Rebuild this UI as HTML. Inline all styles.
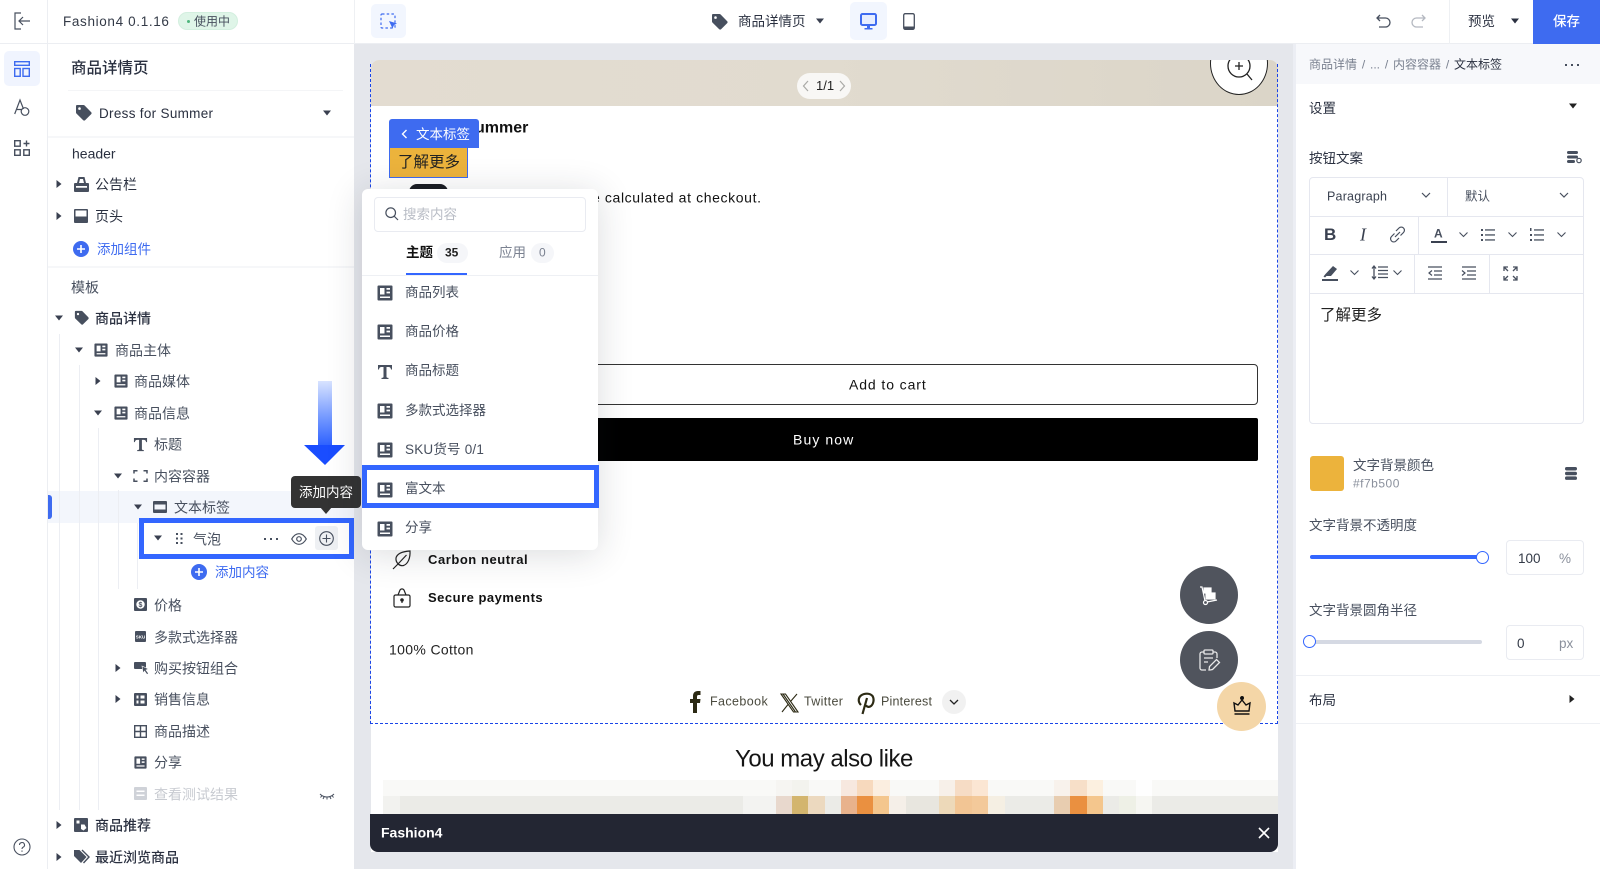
<!DOCTYPE html>
<html lang="zh-CN">
<head>
<meta charset="utf-8">
<title>Fashion4 商品详情页</title>
<style>
html,body{margin:0;padding:0;}
html{background:#fff;}
body{width:1600px;height:869px;overflow:hidden;position:relative;background:#fff;font-family:"Liberation Sans","Noto Sans CJK SC",sans-serif;color:#474f5e;font-size:14px;filter:blur(.35px);}
.a{position:absolute;}
.t{position:absolute;white-space:nowrap;line-height:1;transform:translateY(calc(-50% + .7px));}
svg{position:absolute;overflow:visible;display:block;}
.d{color:#2a3040;}
.lk{color:#3e6bf0;}
.caret{position:absolute;width:0;height:0;}
.cd{border-left:4px solid transparent;border-right:4px solid transparent;border-top:5px solid #3a4050;transform:translate(-50%,-50%);}
.cr{border-top:4px solid transparent;border-bottom:4px solid transparent;border-left:5px solid #3a4050;transform:translate(-50%,-50%);}
.vl{position:absolute;width:1px;background:#eceef3;}
.hl{position:absolute;height:1px;background:#eef0f4;}
.p{color:#111;}
</style>
</head>
<body>
<svg width="0" height="0" style="position:absolute">
<symbol id="w" viewBox="0 0 16 16"><path fill="#474f5e" fill-rule="evenodd" d="M1.500 .5h13a1 1 0 0 1 1 1v13a1 1 0 0 1-1 1h-13a1 1 0 0 1-1-1v-13a1 1 0 0 1 1-1zM3 3v6.500h4.500V3H3zm6.500 0v1.800H13V3H9.500zm0 3.600v1.800H13V6.600H9.500zM3 11.500V13h10v-1.500H3z"/></symbol>
<symbol id="tag" viewBox="0 0 18 18"><path fill="#474f5e" d="M2 1h6.500a1.500 1.500 0 0 1 1 .4l6.600 6.700a1.500 1.500 0 0 1 0 2.100l-5.900 5.900a1.500 1.500 0 0 1-2.100 0L1.400 9.500a1.500 1.500 0 0 1-.4-1V2a1 1 0 0 1 1-1zm2.500 2.300a1.300 1.300 0 1 0 0 2.600 1.300 1.300 0 0 0 0-2.600z"/></symbol>
<symbol id="T" viewBox="0 0 16 16"><path fill="#474f5e" d="M1 1h14v4.500h-1C13.700 3.600 13 3 11 3H9.500v9.500c0 1 .4 1.300 2 1.400V15h-7v-1.100c1.600-.1 2-.4 2-1.400V3H5C3 3 2.300 3.600 2 5.500H1z"/></symbol>
</svg>

<!-- canvas -->
<div class="a" style="left:354px;top:44px;width:939px;height:825px;background:#e5e7ec"></div>
<div class="a" style="left:371px;top:60px;width:907px;height:792px;background:#fff;border-radius:8px 8px 0 0;overflow:hidden">
  <div class="a" style="left:0;top:0;width:100%;height:46px;background:linear-gradient(90deg,#e3dcd1,#e1dbcf 50%,#dbd5c8)"></div>
</div>
<!-- pager -->
<div class="a" style="left:797px;top:73px;width:54px;height:26px;border-radius:13px;background:#f8f7f5"></div>
<div class="t" style="left:816px;top:85px;font-size:13px;color:#222">1/1</div>
<svg style="left:802px;top:80px" width="8" height="12" fill="none" stroke="#a9a9a6" stroke-width="1.200"><path d="M6 1 1.500 6 6 11"/></svg>
<svg style="left:838px;top:80px" width="8" height="12" fill="none" stroke="#a9a9a6" stroke-width="1.200"><path d="M2 1l4.500 5L2 11"/></svg>
<!-- zoom circle -->
<div class="a" style="left:371px;top:60px;width:907px;height:46px;overflow:hidden">
  <div class="a" style="left:839px;top:-28px;width:58px;height:63px;border-radius:50%;background:#fff;border:1px solid #222;box-sizing:border-box"></div>
  <svg style="left:856px;top:-6px" width="26" height="28" fill="none" stroke="#222" stroke-width="1.300"><circle cx="12" cy="12" r="11"/><path d="M20 20l5 6M8 12h8M12 8v8"/></svg>
</div>
<!-- dashed selection -->
<div class="a" style="left:370px;top:64px;width:908px;height:660px;box-sizing:border-box;border:1px dashed #1a45e8;border-top:0"></div>

<!-- product content -->
<div class="t p" style="left:475px;top:128px;font-size:16px;font-weight:bold;">ummer</div>
<div class="a" style="left:409px;top:184px;width:39px;height:14px;border-radius:8px 8px 0 0;background:#1b1d24"></div>
<div class="t p" style="left:592px;top:197px;font-size:14px;letter-spacing:.62px">e calculated at checkout.</div>
<div class="a" style="left:560px;top:364px;width:698px;height:41px;box-sizing:border-box;border:1px solid #333;border-radius:4px;background:#fff"></div>
<div class="t p" style="left:849px;top:383.500px;font-size:14px;letter-spacing:.9px">Add to cart</div>
<div class="a" style="left:560px;top:418px;width:698px;height:43px;background:#000;border-radius:2px"></div>
<div class="t" style="left:793px;top:439px;font-size:14px;color:#fff;letter-spacing:1.100px">Buy now</div>

<svg style="left:392px;top:550px" width="20" height="20" fill="none" stroke="#222" stroke-width="1.200"><path d="M1 19l5-5M4 8c1-4 6-6.500 14-7 .4 7-2 13-6.500 14.500C8 16.500 3.500 13 4 8zM6 14 14.500 5"/></svg>
<div class="t p" style="left:428px;top:559px;font-size:13px;font-weight:bold;letter-spacing:.55px">Carbon neutral</div>
<svg style="left:393px;top:588px" width="18" height="20" fill="none" stroke="#222" stroke-width="1.200"><rect x="1" y="7" width="16" height="12" rx="1.500"/><path d="M5 7l2-5c1-1.500 3-1.500 4 0l2 5"/><circle cx="9" cy="12" r="1.200" fill="#222"/><path d="M9 12v3"/></svg>
<div class="t p" style="left:428px;top:597px;font-size:13px;font-weight:bold;letter-spacing:.5px">Secure payments</div>
<div class="t" style="left:389px;top:649px;font-size:14px;color:#222;letter-spacing:.35px">100% Cotton</div>

<svg style="left:690px;top:691px" width="11" height="22"><path fill="#2c2a14" d="M3 22V12H0V8h3V5c0-3.300 2-5 4.800-5H10.500v4H8.700C7.500 4 7 4.600 7 5.700V8h3.500L10 12H7v10z"/></svg>
<div class="t" style="left:710px;top:701px;font-size:12.500px;color:#4a4a3e;letter-spacing:.4px">Facebook</div>
<svg style="left:780px;top:693px" width="19" height="20" fill="none" stroke="#2c2a14" stroke-width="1.100"><path d="M1 1h4.500L18 19h-4.500zM17 1 10.500 8.500M8 11.500 2 19M3 1l12.500 18"/></svg>
<div class="t" style="left:804px;top:701px;font-size:12.500px;color:#4a4a3e;letter-spacing:.35px">Twitter</div>
<svg style="left:857px;top:692px" width="18" height="23" fill="none" stroke="#2c2a14" stroke-width="2.200"><path d="M4 13C1 10 1 6 4 3.500 7.500 1 13 1 15.500 4c2 3 1 8-1.500 10-2 1.500-4.500 1-5-1M10 6 5.500 22"/></svg>
<div class="t" style="left:881px;top:701px;font-size:12.500px;color:#4a4a3e;letter-spacing:.2px">Pinterest</div>
<div class="a" style="left:942px;top:690px;width:24px;height:24px;border-radius:50%;background:#f1f1f1"></div>
<svg style="left:949px;top:699px" width="10" height="7" fill="none" stroke="#222" stroke-width="1.300"><path d="M1 1l4 4 4-4"/></svg>

<div class="t" style="left:735px;top:759px;font-size:24px;color:#151515;letter-spacing:-.47px">You may also like</div>

<!-- pixelated strip -->
<svg style="left:0;top:780px" width="1278" height="34">
<rect x="383" y="0" width="895" height="16" fill="#f9f9f7"/>
<rect x="383" y="16" width="895" height="18" fill="#ebebe7"/>
<rect x="383" y="16" width="17" height="18" fill="#f2f2ef"/>
<rect x="743" y="16" width="33" height="18" fill="#f3f3f1"/>
<rect x="776" y="0" width="17" height="16" fill="#f6f5f2"/><rect x="776" y="16" width="17" height="18" fill="#e8d8cd"/>
<rect x="792" y="0" width="17" height="16" fill="#f3f3ee"/><rect x="792" y="16" width="17" height="18" fill="#d3b56e"/>
<rect x="808" y="16" width="17" height="18" fill="#ecd9bf"/>
<rect x="841" y="0" width="17" height="16" fill="#f7e8df"/><rect x="841" y="16" width="17" height="18" fill="#e8b28c"/>
<rect x="857" y="0" width="17" height="16" fill="#f7d9bd"/><rect x="857" y="16" width="17" height="18" fill="#ea9040"/>
<rect x="873" y="0" width="17" height="16" fill="#fbeee0"/><rect x="873" y="16" width="17" height="18" fill="#f4c68d"/>
<rect x="889" y="16" width="17" height="18" fill="#f5efe8"/>
<rect x="906" y="16" width="33" height="18" fill="#e8e6df"/>
<rect x="939" y="0" width="16" height="16" fill="#f7f0e9"/><rect x="939" y="16" width="16" height="18" fill="#edd9b9"/>
<rect x="955" y="0" width="17" height="16" fill="#f6dcc5"/><rect x="955" y="16" width="17" height="18" fill="#f2c594"/>
<rect x="972" y="0" width="16" height="16" fill="#fbe6d3"/><rect x="972" y="16" width="16" height="18" fill="#f3c99a"/>
<rect x="988" y="16" width="17" height="18" fill="#f5efe3"/>
<rect x="1054" y="0" width="16" height="16" fill="#f8f2ec"/><rect x="1054" y="16" width="16" height="18" fill="#e8cdb0"/>
<rect x="1070" y="0" width="17" height="16" fill="#f7dfc8"/><rect x="1070" y="16" width="17" height="18" fill="#ea9040"/>
<rect x="1087" y="0" width="16" height="16" fill="#fcf0e0"/><rect x="1087" y="16" width="16" height="18" fill="#f4c68d"/>
<rect x="1119" y="16" width="17" height="18" fill="#eef0e6"/>
<rect x="1136" y="0" width="16" height="16" fill="#fefefe"/><rect x="1136" y="16" width="16" height="18" fill="#f6f6f2"/>
</svg>

<!-- bottom bar -->
<div class="a" style="left:370px;top:814px;width:908px;height:38px;background:#232633;border-radius:0 0 8px 8px"></div>
<div class="t" style="left:381px;top:832px;font-size:14px;font-weight:bold;color:#fff">Fashion4</div>
<svg style="left:1258px;top:827px" width="12" height="12" fill="none" stroke="#fff" stroke-width="1.600"><path d="M1 1l10 10M11 1 1 11"/></svg>

<!-- float buttons -->
<div class="a" style="left:1180px;top:566px;width:58px;height:58px;border-radius:50%;background:#50545d"></div>
<svg style="left:1199px;top:586px" width="20" height="20" fill="none" stroke="#fff" stroke-width="1.200"><path d="M1 1h2l3 14"/><circle cx="6.500" cy="16.500" r="2"/><path d="M8 16l10-2"/><rect x="5" y="2" width="7" height="5" fill="#fff"/><rect x="7" y="7" width="9" height="6" fill="#fff"/></svg>
<div class="a" style="left:1180px;top:631px;width:58px;height:58px;border-radius:50%;background:#50545d"></div>
<svg style="left:1199px;top:649px" width="21" height="23" fill="none" stroke="#e8e8e8" stroke-width="1.300"><path d="M5 3H3a2 2 0 0 0-2 2v14a2 2 0 0 0 2 2h4M14 3h2a2 2 0 0 1 2 2v4"/><rect x="5" y="1" width="9" height="4" rx="1"/><path d="M5 9h9M5 13h4M11 21l-1 0 .5-3.500 7-7 3 3-7 7z"/></svg>
<div class="a" style="left:1217px;top:682px;width:49px;height:49px;border-radius:50%;background:#f4d6a7"></div>
<svg style="left:1233px;top:696px" width="18" height="20" fill="none" stroke="#111" stroke-width="1.400"><circle cx="9" cy="2" r="1.300" fill="#111"/><path d="M9 4 5 9 1 7l1 8h14l1-8-4 2zM1.500 18h15"/></svg>

<!-- top bar -->
<div class="a" style="left:0;top:0;width:1600px;height:44px;background:#fff;border-bottom:1px solid #eceef2;box-sizing:border-box"></div>
<svg style="left:14px;top:12px" width="17" height="18" fill="none" stroke="#474f5e" stroke-width="1.200"><path d="M7 1H1v16h6M16 9H5M9 5 5 9l4 4"/></svg>
<div class="a" style="left:47px;top:0;width:1px;height:869px;background:#eceef2"></div>
<div class="t" style="left:63px;top:20.500px;font-size:13.500px;color:#333a47;letter-spacing:.65px">Fashion4 0.1.16</div>
<div class="a" style="left:178px;top:12px;width:60px;height:18px;border-radius:9px;background:#dff5e8;border:1px solid #d3efdf;box-sizing:border-box"></div>
<div class="a" style="left:187px;top:20px;width:3px;height:3px;border-radius:50%;background:#4fb67d"></div>
<div class="t" style="left:194px;top:20.500px;font-size:12px">使用中</div>
<div class="a" style="left:354px;top:0;width:1px;height:44px;background:#eef0f3"></div>

<div class="a" style="left:371px;top:4px;width:35px;height:34px;border-radius:5px;background:#f2f6fe"></div>
<svg style="left:380px;top:13px" width="18" height="17" fill="none"><rect x="1" y="1" width="14" height="14" rx="1" stroke="#3e6bf0" stroke-width="1.200" stroke-dasharray="2.500 2.200"/><path fill="#3e6bf0" d="M9 8l8 2.500-3 1.500-1.500 3.500z"/></svg>

<svg style="left:711px;top:13px" width="18" height="18"><use href="#tag"/></svg>
<div class="t d" style="left:738px;top:20.500px;font-size:13.500px">商品详情页</div>
<div class="caret cd" style="left:820px;top:21px"></div>
<div class="a" style="left:850px;top:2px;width:37px;height:38px;border-radius:5px;background:#f2f6fe"></div>
<svg style="left:860px;top:13px" width="17" height="17"><rect x="1" y="1" width="15" height="11" rx="1.500" fill="#e7eeff" stroke="#3e6bf0" stroke-width="2"/><path fill="#3e6bf0" d="M7 12h3v3H7zM4.500 15h8v1.500h-8z"/></svg>
<svg style="left:903px;top:13px" width="12" height="17" fill="none"><rect x=".7" y=".7" width="10.600" height="15.600" rx="1.500" stroke="#474f5e" stroke-width="1.300"/><rect x="1" y="13.500" width="10" height="2.500" fill="#474f5e"/></svg>

<svg style="left:1376px;top:14px" width="15" height="15" fill="none" stroke="#474f5e" stroke-width="1.300"><path d="M4 1 1 4l3 3M1 4h8.500a4 4 0 0 1 0 9H3"/></svg>
<svg style="left:1411px;top:14px" width="15" height="15" fill="none" stroke="#b4b8c0" stroke-width="1.300"><path d="M11 1l3 3-3 3M14 4H5.500a4 4 0 0 0 0 9H12"/></svg>
<div class="a" style="left:1449px;top:0;width:1px;height:44px;background:#eef0f3"></div>
<div class="t d" style="left:1468px;top:20.500px;font-size:13.500px">预览</div>
<div class="caret cd" style="left:1515px;top:21px;border-top-color:#2a3040"></div>
<div class="a" style="left:1533px;top:0;width:67px;height:44px;background:#3e6bf0"></div>
<div class="t" style="left:1553px;top:20.500px;font-size:13.500px;font-weight:500;color:#fff">保存</div>

<!-- left rail -->
<div class="a" style="left:4px;top:51px;width:36px;height:35px;border-radius:5px;background:#f0f4fe"></div>
<svg style="left:14px;top:61px" width="16" height="16" fill="none" stroke="#3e6bf0" stroke-width="1.400"><rect x=".7" y=".7" width="14.600" height="3.600"/><rect x=".7" y="7.500" width="5.500" height="7.800"/><rect x="9" y="7.500" width="6.300" height="7.800"/></svg>
<svg style="left:14px;top:99px" width="16" height="18" fill="none" stroke="#474f5e" stroke-width="1.200"><path d="M.7 15 6 1l3.500 9M3 10.500h5"/><circle cx="11" cy="12.500" r="3.800"/></svg>
<svg style="left:14px;top:140px" width="16" height="16" fill="none" stroke="#474f5e" stroke-width="1.400"><rect x=".7" y=".7" width="5.500" height="5.500"/><rect x=".7" y="9.800" width="5.500" height="5.500"/><rect x="9.800" y="9.800" width="5.500" height="5.500"/><path d="M12.500.5v6M9.500 3.500h6"/></svg>
<svg style="left:13px;top:838px" width="18" height="18" fill="none" stroke="#474f5e" stroke-width="1.100"><circle cx="9" cy="9" r="8"/><path d="M6.500 7a2.500 2.500 0 1 1 3.500 2.300c-.7.300-1 .8-1 1.700M9 12.500v1.200"/></svg>

<!-- left panel -->
<div class="t d" style="left:71px;top:68px;font-size:15.500px;font-weight:500">商品详情页</div>
<div class="hl" style="left:68px;top:90px;width:275px;background:#f4f5f7"></div>
<svg style="left:75px;top:104px" width="18" height="18"><use href="#tag"/></svg>
<div class="t d" style="left:99px;top:112.500px;font-size:13.500px;letter-spacing:.3px">Dress for Summer</div>
<div class="caret cd" style="left:327px;top:113px"></div>
<div class="hl" style="left:48px;top:136px;width:306px;height:2px;background:#f6f7f9"></div>
<div class="t d" style="left:72px;top:152.500px;font-size:14px">header</div>

<div class="caret cr" style="left:59px;top:184px"></div>
<svg style="left:74px;top:177px" width="15" height="15"><path fill="#474f5e" fill-rule="evenodd" d="M4.500 0h6L12 6h2a1 1 0 0 1 1 1v7a1 1 0 0 1-1 1H1a1 1 0 0 1-1-1V7a1 1 0 0 1 1-1h2zM6 2 5 6h5L9 2zM2 9v1.800h11V9z"/></svg>
<div class="t d" style="left:95px;top:184px;font-size:14px">公告栏</div>
<div class="caret cr" style="left:59px;top:216px"></div>
<svg style="left:74px;top:209px" width="14" height="14"><path fill="#474f5e" fill-rule="evenodd" d="M1 0h12a1 1 0 0 1 1 1v12a1 1 0 0 1-1 1H1a1 1 0 0 1-1-1V1a1 1 0 0 1 1-1zm.500 1.500v6h11v-6z"/></svg>
<div class="t d" style="left:95px;top:216px;font-size:14px">页头</div>
<div class="a" style="left:73px;top:241px;width:16px;height:16px;border-radius:50%;background:#3e6bf0"></div>
<svg style="left:73px;top:241px" width="16" height="16" stroke="#fff" stroke-width="1.600"><path d="M4 8h8M8 4v8"/></svg>
<div class="t lk" style="left:97px;top:249px;font-size:13.500px">添加组件</div>
<div class="hl" style="left:48px;top:266px;width:306px;height:2px;background:#f6f7f9"></div>
<div class="t" style="left:71px;top:287px;font-size:14px">模板</div>

<!-- tree lines -->
<div class="vl" style="left:59px;top:334px;height:476px"></div>
<div class="vl" style="left:79px;top:365px;height:445px"></div>
<div class="vl" style="left:98px;top:428px;height:382px"></div>

<div class="a" style="left:48px;top:491px;width:306px;height:32px;background:#f3f6fc"></div>
<div class="a" style="left:48px;top:495px;width:4px;height:24px;border-radius:0 3px 3px 0;background:#3e6bf0"></div>
<div class="vl" style="left:59px;top:491px;height:32px"></div>
<div class="vl" style="left:79px;top:491px;height:32px"></div>
<div class="vl" style="left:98px;top:491px;height:32px"></div>
<div class="vl" style="left:118px;top:490px;height:99px"></div>
<div class="vl" style="left:137px;top:523px;height:66px"></div>

<div class="caret cd" style="left:59px;top:318px"></div>
<svg style="left:74px;top:310px" width="16" height="16"><use href="#tag"/></svg>
<div class="t d" style="left:95px;top:318px;font-size:14px;font-weight:500">商品详情</div>

<div class="caret cd" style="left:79px;top:350px"></div>
<svg style="left:94px;top:343px" width="14" height="14"><use href="#w"/></svg>
<div class="t" style="left:115px;top:350px;font-size:14px">商品主体</div>

<div class="caret cr" style="left:98px;top:381px"></div>
<svg style="left:114px;top:374px" width="14" height="14"><use href="#w"/></svg>
<div class="t" style="left:134px;top:381px;font-size:14px">商品媒体</div>

<div class="caret cd" style="left:98px;top:413px"></div>
<svg style="left:114px;top:406px" width="14" height="14"><use href="#w"/></svg>
<div class="t" style="left:134px;top:413px;font-size:14px">商品信息</div>

<svg style="left:133px;top:437px" width="15" height="15"><use href="#T"/></svg>
<div class="t" style="left:154px;top:444px;font-size:14px">标题</div>

<div class="caret cd" style="left:118px;top:476px"></div>
<svg style="left:134px;top:470px" width="13" height="12" fill="none" stroke="#474f5e" stroke-width="1.500"><path d="M0 3.500V.7h3.500M9.500.7H13v2.800M13 8.500v2.800H9.500M3.500 11.300H0V8.500"/></svg>
<div class="t" style="left:154px;top:476px;font-size:14px">内容容器</div>

<div class="caret cd" style="left:138px;top:507px"></div>
<svg style="left:153px;top:501px" width="14" height="12"><path fill="#474f5e" fill-rule="evenodd" d="M1 0h12a1 1 0 0 1 1 1v10a1 1 0 0 1-1 1H1a1 1 0 0 1-1-1V1a1 1 0 0 1 1-1zm.500 3.500v5h11v-5z"/></svg>
<div class="t" style="left:174px;top:507px;font-size:14px">文本标签</div>

<!-- highlighted row -->
<div class="a" style="left:139px;top:518px;width:215px;height:41px;box-sizing:border-box;border:5px solid #3366ff;background:#fff"></div>
<div class="caret cd" style="left:158px;top:538px"></div>
<svg style="left:176px;top:533px" width="7" height="12" fill="#474f5e"><rect width="2" height="2"/><rect x="4.500" width="2" height="2"/><rect y="4.500" width="2" height="2"/><rect x="4.500" y="4.500" width="2" height="2"/><rect y="9" width="2" height="2"/><rect x="4.500" y="9" width="2" height="2"/></svg>
<div class="t" style="left:193px;top:539px;font-size:14px">气泡</div>
<svg style="left:264px;top:538px" width="15" height="3" fill="#474f5e"><rect width="2" height="2"/><rect x="6" width="2" height="2"/><rect x="12" width="2" height="2"/></svg>
<svg style="left:291px;top:533px" width="16" height="12" fill="none" stroke="#474f5e" stroke-width="1.200"><path d="M.7 6C3 2 5.500.7 8 .7S13 2 15.300 6C13 10 10.500 11.300 8 11.300S3 10 .7 6z"/><circle cx="8" cy="6" r="2.300"/></svg>
<div class="a" style="left:315px;top:526px;width:23px;height:24px;border-radius:3px;background:#eef0f3"></div>
<svg style="left:319px;top:531px" width="15" height="15" fill="none" stroke="#474f5e" stroke-width="1.100"><circle cx="7.500" cy="7.500" r="6.800"/><path d="M3.500 7.500h8M7.500 3.500v8"/></svg>

<!-- tooltip -->
<div class="a" style="left:291px;top:476px;width:70px;height:32px;border-radius:4px;background:#333"></div>
<div class="a" style="left:320px;top:507px;width:0;height:0;border-left:6px solid transparent;border-right:6px solid transparent;border-top:7px solid #333"></div>
<div class="t" style="left:299px;top:492px;font-size:13.500px;color:#fff">添加内容</div>

<!-- arrow -->
<div class="a" style="left:318px;top:381px;width:14px;height:64px;background:linear-gradient(180deg,#d8e3ff,#6f95ff 60%,#2f62ff)"></div>
<div class="a" style="left:304px;top:445px;width:0;height:0;border-left:21px solid transparent;border-right:20px solid transparent;border-top:20px solid #1a4dff"></div>

<div class="a" style="left:191px;top:564px;width:16px;height:16px;border-radius:50%;background:#3e6bf0"></div>
<svg style="left:191px;top:564px" width="16" height="16" stroke="#fff" stroke-width="1.600"><path d="M4 8h8M8 4v8"/></svg>
<div class="t lk" style="left:215px;top:572px;font-size:13.500px">添加内容</div>

<svg style="left:134px;top:598px" width="13" height="13"><rect width="13" height="13" rx="1" fill="#474f5e"/><circle cx="6.500" cy="6.500" r="4.200" fill="#fff"/><text x="6.500" y="9" font-size="7" font-weight="bold" text-anchor="middle" fill="#474f5e" font-family="Liberation Sans, sans-serif">$</text></svg>
<div class="t" style="left:154px;top:605px;font-size:14px">价格</div>
<svg style="left:135px;top:631px" width="11" height="11"><rect width="11" height="11" rx="1" fill="#474f5e"/><text x="5.500" y="7.300" font-size="4.500" font-weight="bold" text-anchor="middle" fill="#fff" font-family="Liberation Sans, sans-serif">SKU</text></svg>
<div class="t" style="left:154px;top:637px;font-size:14px">多款式选择器</div>
<div class="caret cr" style="left:118px;top:668px"></div>
<svg style="left:134px;top:662px" width="15" height="13"><rect width="12" height="7" rx="1" fill="#474f5e"/><path fill="#474f5e" stroke="#fff" stroke-width=".6" d="M8 4l6.500 3-2.500 1 2.500 3.500-1.500 1L10.500 9l-1.500 2z"/></svg>
<div class="t" style="left:154px;top:668px;font-size:14px">购买按钮组合</div>
<div class="caret cr" style="left:118px;top:699px"></div>
<svg style="left:134px;top:693px" width="13" height="13"><path fill="#474f5e" fill-rule="evenodd" d="M1 0h11a1 1 0 0 1 1 1v11a1 1 0 0 1-1 1H1a1 1 0 0 1-1-1V1a1 1 0 0 1 1-1zm1.500 2.500v3h2v-3zm0 5v3h2v-3zm4-5v3h4v-3zm0 5v3h4v-3z"/></svg>
<div class="t" style="left:154px;top:699px;font-size:14px">销售信息</div>
<svg style="left:134px;top:725px" width="13" height="13" fill="none" stroke="#474f5e" stroke-width="1.400"><rect x=".7" y=".7" width="11.600" height="11.600"/><path d="M6.500 .7v11.600M.7 6.500h11.600"/></svg>
<div class="t" style="left:154px;top:731px;font-size:14px">商品描述</div>
<svg style="left:134px;top:756px" width="13" height="13"><use href="#w"/></svg>
<div class="t" style="left:154px;top:762px;font-size:14px">分享</div>
<svg style="left:134px;top:787px" width="13" height="13"><path fill="#cfd2d8" fill-rule="evenodd" d="M1 0h11a1 1 0 0 1 1 1v11a1 1 0 0 1-1 1H1a1 1 0 0 1-1-1V1a1 1 0 0 1 1-1zm1.500 3.500v1.500h8V3.500zm0 4v1.500h8V7.500z"/></svg>
<div class="t" style="left:154px;top:794px;font-size:14px;color:#c8cbd1">查看测试结果</div>
<svg style="left:319px;top:792px" width="16" height="8" fill="none" stroke="#474f5e" stroke-width="1"><path d="M1 2c4 4 10 4 14 0M3 3.500 1.500 5.500M8 5v2.500M13 3.500l1.500 2M5 5 4 7M11 5l1 2"/></svg>

<div class="caret cr" style="left:59px;top:825px"></div>
<svg style="left:74px;top:818px" width="14" height="14"><path fill="#474f5e" fill-rule="evenodd" d="M1 0h12a1 1 0 0 1 1 1v12a1 1 0 0 1-1 1H1a1 1 0 0 1-1-1V1a1 1 0 0 1 1-1zm1.500 2.500v3h3v-3zM7 6.500V11l2.500 1.500 3-2.500-2-3.500z"/></svg>
<div class="t d" style="left:95px;top:825px;font-size:14px;font-weight:500">商品推荐</div>
<div class="caret cr" style="left:59px;top:857px"></div>
<svg style="left:73px;top:849px" width="17" height="16"><path fill="#474f5e" d="M1 1h5.500l7 7-5.500 6-7-7z"/><path fill="none" stroke="#474f5e" stroke-width="1.400" d="M9 1l7 7-5.500 6"/></svg>
<div class="t d" style="left:95px;top:856.500px;font-size:14px;font-weight:500">最近浏览商品</div>

<!-- right panel -->
<div class="a" style="left:1293px;top:44px;width:307px;height:825px;background:#fff"></div>
<div class="a" style="left:1293px;top:44px;width:307px;height:40px;background:#f7f8fb"></div>
<div class="t" style="left:1309px;top:64px;font-size:12px;color:#7a8190;word-spacing:1.500px">商品详情 / ... / 内容容器 / <span style="color:#2a3040">文本标签</span></div>
<svg style="left:1565px;top:64px" width="15" height="2" fill="#474f5e"><rect width="2" height="2"/><rect x="6" width="2" height="2"/><rect x="12" width="2" height="2"/></svg>

<div class="t d" style="left:1309px;top:108px;font-size:13.500px">设置</div>
<div class="caret cd" style="left:1573px;top:106px;border-top-color:#222"></div>
<div class="t d" style="left:1309px;top:158px;font-size:13.500px">按钮文案</div>
<svg style="left:1567px;top:151px" width="15" height="13" fill="#474f5e"><rect width="11" height="3" rx="1.500"/><rect y="4.500" width="11" height="3" rx="1.500"/><rect y="9" width="8" height="3" rx="1.500"/><circle cx="12" cy="9.500" r="2.200" fill="none" stroke="#474f5e" stroke-width="1.200"/></svg>

<div class="a" style="left:1309px;top:177px;width:275px;height:247px;box-sizing:border-box;border:1px solid #e5e7ef;border-radius:4px;background:#fff"></div>
<div class="hl" style="left:1310px;top:216px;width:273px;background:#e5e7ef"></div>
<div class="hl" style="left:1310px;top:254px;width:273px;background:#e5e7ef"></div>
<div class="hl" style="left:1310px;top:293px;width:273px;background:#e5e7ef"></div>
<div class="vl" style="left:1447px;top:177px;height:39px;background:#e5e7ef"></div>
<div class="vl" style="left:1418px;top:216px;height:38px;background:#e5e7ef"></div>
<div class="vl" style="left:1414px;top:254px;height:39px;background:#e5e7ef"></div>
<div class="vl" style="left:1489px;top:254px;height:39px;background:#e5e7ef"></div>

<div class="t" style="left:1327px;top:195.500px;font-size:12.500px;color:#3a4150;letter-spacing:.2px">Paragraph</div>
<svg style="left:1421px;top:192px" width="10" height="7" fill="none" stroke="#474f5e" stroke-width="1.200"><path d="M1 1l4 4 4-4"/></svg>
<div class="t" style="left:1465px;top:195.500px;font-size:12.500px">默认</div>
<svg style="left:1559px;top:192px" width="10" height="7" fill="none" stroke="#474f5e" stroke-width="1.200"><path d="M1 1l4 4 4-4"/></svg>

<div class="t" style="left:1324px;top:234px;font-size:17px;font-weight:bold;color:#3a4150">B</div>
<div class="t" style="left:1360px;top:234px;font-size:18px;font-style:italic;font-family:'Liberation Serif',serif;color:#3a4150">I</div>
<svg style="left:1389px;top:226px" width="17" height="17" fill="none" stroke="#474f5e" stroke-width="1.200"><path d="M7 5l3-3a3 3 0 0 1 4.500 4.500l-3 3M10 12l-3 3a3 3 0 0 1-4.500-4.500l3-3M6 11l5-5"/></svg>
<div class="t" style="left:1434px;top:233px;font-size:12px;font-weight:bold;color:#474f5e">A</div>
<div class="a" style="left:1431px;top:241px;width:16px;height:2px;background:#3a4150"></div>
<svg style="left:1459px;top:232px" width="9" height="6" fill="none" stroke="#474f5e" stroke-width="1.100"><path d="M.5.500l4 4 4-4"/></svg>
<svg style="left:1481px;top:228px" width="14" height="13" fill="#474f5e"><rect width="2" height="2" y="1"/><rect width="2" height="2" y="6"/><rect width="2" height="2" y="11"/><rect x="4" y="1.300" width="10" height="1.300"/><rect x="4" y="6.300" width="10" height="1.300"/><rect x="4" y="11.300" width="10" height="1.300"/></svg>
<svg style="left:1508px;top:232px" width="9" height="6" fill="none" stroke="#474f5e" stroke-width="1.100"><path d="M.5.500l4 4 4-4"/></svg>
<svg style="left:1530px;top:228px" width="14" height="13" fill="#474f5e"><rect width="1.500" height="3" y="0"/><rect width="2" height="2" y="6"/><rect width="2" height="2" y="11"/><rect x="4" y="1.300" width="10" height="1.300"/><rect x="4" y="6.300" width="10" height="1.300"/><rect x="4" y="11.300" width="10" height="1.300"/></svg>
<svg style="left:1557px;top:232px" width="9" height="6" fill="none" stroke="#474f5e" stroke-width="1.100"><path d="M.5.500l4 4 4-4"/></svg>

<svg style="left:1322px;top:265px" width="17" height="16"><path fill="#474f5e" d="M11 1l4 3-6 7H4.500L3 12.500 1.500 11.500 3.500 9z"/><rect y="14" width="16" height="2" fill="#474f5e"/></svg>
<svg style="left:1350px;top:270px" width="9" height="6" fill="none" stroke="#474f5e" stroke-width="1.100"><path d="M.5.500l4 4 4-4"/></svg>
<svg style="left:1371px;top:265px" width="17" height="15" fill="none" stroke="#474f5e" stroke-width="1.300"><path d="M3 1v13M1 3.500 3 1l2 2.500M1 11.500 3 14l2-2.500"/><path d="M7 2h10M7 5.500h10M7 9h10M7 12.500h10"/></svg>
<svg style="left:1393px;top:270px" width="9" height="6" fill="none" stroke="#474f5e" stroke-width="1.100"><path d="M.5.500l4 4 4-4"/></svg>
<svg style="left:1428px;top:266px" width="15" height="14" fill="none" stroke="#474f5e" stroke-width="1.200"><path d="M0 1h14M6 5h8M6 9h8M0 13h14M4 4.500 1 7l3 2.500"/></svg>
<svg style="left:1461px;top:266px" width="15" height="14" fill="none" stroke="#474f5e" stroke-width="1.200"><path d="M1 1h14M6 5h9M6 9h9M1 13h14M1 4.500 4 7 1 9.500"/></svg>
<svg style="left:1503px;top:266px" width="15" height="15" fill="none" stroke="#474f5e" stroke-width="1.300"><path d="M1 5V1h4M1 1l4 4M14 5V1h-4M14 1l-4 4M1 10v4h4M1 14l4-4M14 10v4h-4M14 14l-4-4"/></svg>

<div class="t p" style="left:1320px;top:315px;font-size:15.500px;color:#222">了解更多</div>

<div class="a" style="left:1310px;top:456px;width:34px;height:35px;border-radius:3px;background:#ecb33c"></div>
<div class="t" style="left:1353px;top:465px;font-size:13.500px">文字背景颜色</div>
<div class="t" style="left:1353px;top:483px;font-size:12px;color:#8a909c;letter-spacing:.5px">#f7b500</div>
<svg style="left:1565px;top:467px" width="12" height="13" fill="#474f5e"><rect width="12" height="3.500" rx="1.700"/><rect y="4.700" width="12" height="3.500" rx="1.700"/><rect y="9.400" width="12" height="3.500" rx="1.700"/></svg>
<div class="t" style="left:1309px;top:525px;font-size:13.500px">文字背景不透明度</div>
<div class="a" style="left:1310px;top:555px;width:172px;height:4px;border-radius:2px;background:#3366ff"></div>
<div class="a" style="left:1476px;top:551px;width:13px;height:13px;border-radius:50%;background:#fff;border:1.500px solid #3366ff;box-sizing:border-box"></div>
<div class="a" style="left:1506px;top:540px;width:78px;height:35px;box-sizing:border-box;border:1px solid #e9ebf1;border-radius:4px"></div>
<div class="t" style="left:1518px;top:558px;font-size:13.500px;color:#333a47">100</div>
<div class="t" style="left:1559px;top:558px;font-size:13.500px;color:#8a909c">%</div>
<div class="t" style="left:1309px;top:610px;font-size:13.500px">文字背景圆角半径</div>
<div class="a" style="left:1310px;top:640px;width:172px;height:4px;border-radius:2px;background:#d5d9e3"></div>
<div class="a" style="left:1303px;top:635px;width:13px;height:13px;border-radius:50%;background:#fff;border:1.500px solid #3366ff;box-sizing:border-box"></div>
<div class="a" style="left:1506px;top:625px;width:78px;height:35px;box-sizing:border-box;border:1px solid #e9ebf1;border-radius:4px"></div>
<div class="t" style="left:1517px;top:642.500px;font-size:13.500px;color:#333a47">0</div>
<div class="t" style="left:1559px;top:643px;font-size:13.500px;color:#8a909c">px</div>
<div class="hl" style="left:1293px;top:675px;width:307px"></div>
<div class="t d" style="left:1309px;top:700px;font-size:13.500px">布局</div>
<div class="caret cr" style="left:1572px;top:699px;border-left-color:#222"></div>
<div class="hl" style="left:1293px;top:723px;width:307px"></div>
<div class="a" style="left:1293px;top:44px;width:3px;height:825px;background:#eceef4"></div>

<!-- product tag label (over content) -->
<div class="a" style="left:389px;top:148px;width:79px;height:30px;box-sizing:border-box;background:#ecb33c;border:1px solid #3e6bf0;border-top:0"></div>
<div class="t" style="left:398px;top:162px;font-size:15.500px;color:#222">了解更多</div>
<div class="a" style="left:389px;top:119px;width:90px;height:29px;background:#3e6bf0;border-radius:3px 3px 0 0"></div>
<svg style="left:401px;top:129px" width="7" height="10" fill="none" stroke="#fff" stroke-width="1.400"><path d="M5.500 1 1.500 5l4 4"/></svg>
<div class="t" style="left:416px;top:133.500px;font-size:13.500px;color:#fff">文本标签</div>

<!-- popup -->
<div class="a" style="left:362px;top:189px;width:236px;height:361px;background:#fff;border-radius:6px;box-shadow:0 4px 36px rgba(30,35,50,.16)"></div>
<div class="a" style="left:374px;top:197px;width:212px;height:35px;box-sizing:border-box;border:1px solid #e9ebf1;border-radius:4px"></div>
<svg style="left:385px;top:207px" width="14" height="14" fill="none" stroke="#474f5e" stroke-width="1.200"><circle cx="5.700" cy="5.700" r="4.800"/><path d="M9 9l4 4"/></svg>
<div class="t" style="left:403px;top:214px;font-size:13.500px;color:#b9bdc6">搜索内容</div>
<div class="t" style="left:406px;top:252px;font-size:13.500px;font-weight:bold;color:#111">主题</div>
<div class="a" style="left:437px;top:243px;width:31px;height:20px;border-radius:10px;background:#f5f6f9"></div>
<div class="t" style="left:445px;top:252px;font-size:12px;font-weight:bold;color:#222">35</div>
<div class="t" style="left:499px;top:252px;font-size:13.500px;color:#7a8190">应用</div>
<div class="a" style="left:531px;top:243px;width:23px;height:20px;border-radius:10px;background:#f5f6f9"></div>
<div class="t" style="left:539px;top:252px;font-size:12px;color:#7a8190">0</div>
<div class="hl" style="left:362px;top:275px;width:236px"></div>
<div class="a" style="left:406px;top:273px;width:61px;height:2px;background:#3366ff"></div>

<svg style="left:377px;top:285px" width="16" height="16"><use href="#w"/></svg>
<div class="t" style="left:405px;top:292px;font-size:13.500px">商品列表</div>
<svg style="left:377px;top:324px" width="16" height="16"><use href="#w"/></svg>
<div class="t" style="left:405px;top:331px;font-size:13.500px">商品价格</div>
<svg style="left:377px;top:364px" width="16" height="16"><use href="#T"/></svg>
<div class="t" style="left:405px;top:370px;font-size:13.500px">商品标题</div>
<svg style="left:377px;top:403px" width="16" height="16"><use href="#w"/></svg>
<div class="t" style="left:405px;top:409.500px;font-size:13.500px">多款式选择器</div>
<svg style="left:377px;top:442px" width="16" height="16"><use href="#w"/></svg>
<div class="t" style="left:405px;top:449px;font-size:13.500px;letter-spacing:.2px">SKU货号 0/1</div>
<div class="a" style="left:362px;top:465px;width:237px;height:43px;box-sizing:border-box;border:5px solid #3366ff;background:#fff"></div>
<svg style="left:377px;top:482px" width="16" height="16"><use href="#w"/></svg>
<div class="t" style="left:405px;top:488px;font-size:13.500px">富文本</div>
<svg style="left:377px;top:521px" width="16" height="16"><use href="#w"/></svg>
<div class="t" style="left:405px;top:527px;font-size:13.500px">分享</div>

</body>
</html>
